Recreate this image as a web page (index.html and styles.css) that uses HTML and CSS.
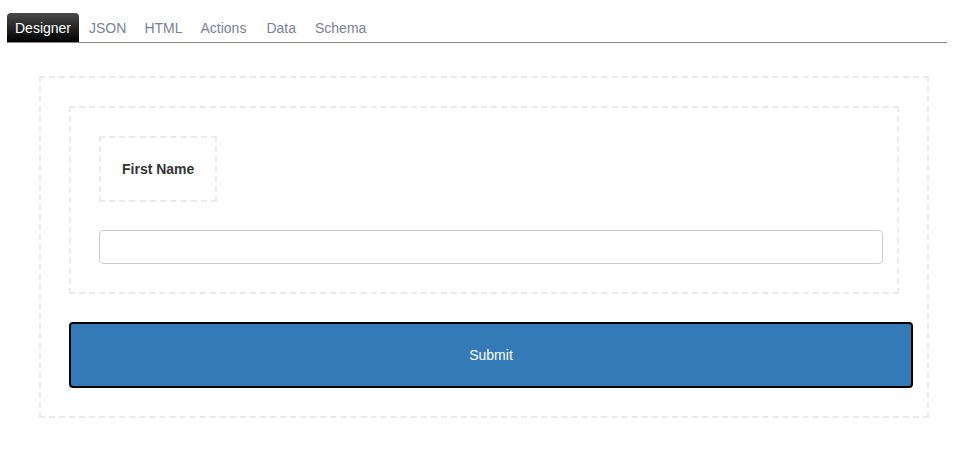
FILE: index.html
```html
<!DOCTYPE html>
<html>
<head>
<meta charset="utf-8">
<link rel="stylesheet" href="styles.css">
</head>
<body>
<nav class="tabs">
  <a class="tab active">Designer</a>
  <a class="tab">JSON</a>
  <a class="tab">HTML</a>
  <a class="tab">Actions</a>
  <a class="tab">Data</a>
  <a class="tab">Schema</a>
</nav>
<div class="form-outer">
  <div class="form-group-box">
    <div class="label-box">First Name</div>
    <input class="text-input" type="text">
  </div>
  <button class="submit-btn">Submit</button>
</div>
</body>
</html>
```
FILE: styles.css
```css
html, body {
  margin: 0;
  padding: 0;
  background: #fff;
  font-family: "Liberation Sans", Arial, sans-serif;
  font-size: 14px;
}
.tabs {
  display: flex;
  margin: 13px 7px 0 7px;
  border-bottom: 1px solid #888;
}
.tab {
  display: block;
  height: 28px;
  padding: 1px 9px 0 9px;
  line-height: 29px;
  color: #7a8196;
  cursor: pointer;
}
.tab.active {
  color: #fff;
  padding: 1px 8px 0 8px;
  margin-right: 1px;
  background: linear-gradient(#4a4a4a, #000);
  border-radius: 4px 4px 0 0;
}
.tab:nth-child(5) {
  padding-right: 10px;
  padding-left: 10px;
}
.tab:nth-child(4) {
  padding-right: 10px;
}
.form-outer {
  box-sizing: border-box;
  width: 890px;
  margin: 33px 0 0 39px;
  padding: 28px;
  border: 2px dashed #eaeaea;
}
.form-group-box {
  border: 2px dashed #eaeaea;
  padding: 28px;
}
.label-box {
  width: fit-content;
  border: 2px dashed #eaeaea;
  padding: 21px;
  line-height: 20px;
  font-weight: bold;
  color: #333;
  margin-bottom: 28px;
}
.text-input {
  display: block;
  box-sizing: border-box;
  width: calc(100% + 14px);
  height: 34px;
  margin: 0;
  border: 1px solid #ccc;
  border-radius: 4px;
  background: #fff;
}
.submit-btn {
  display: block;
  box-sizing: border-box;
  width: calc(100% + 14px);
  height: 66px;
  margin-top: 28px;
  background: #337ab7;
  color: #fff;
  border: 2px solid #000;
  border-radius: 4px;
  font-family: "Liberation Sans", Arial, sans-serif;
  font-size: 14px;
}
```
